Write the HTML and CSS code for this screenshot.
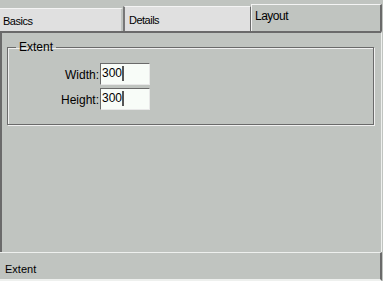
FILE: index.html
```html
<!DOCTYPE html>
<html lang="en">
<head>
  <meta charset="UTF-8" />
  <title>Properties</title>
  <link rel="stylesheet" href="styles.css">
</head>
<body>
  <div class="window">
    <div class="tabs">
      <div class="tab tab-basics">Basics</div>
      <div class="tab tab-details">Details</div>
      <div class="tab tab-layout active">Layout</div>
    </div>
    <div class="panel">
      <fieldset class="group">
        <legend>Extent</legend>
        <div class="form">
          <label>Width:</label>
          <div class="field">300<span class="caret"></span></div>
          <label>Height:</label>
          <div class="field">300<span class="caret"></span></div>
        </div>
      </fieldset>
    </div>
    <div class="status">Extent</div>
  </div>
</body>
</html>
```

FILE: styles.css
```css
body {
  margin: 0;
  background: #c0c4c0;
  font-family: "Liberation Sans", Arial, sans-serif;
  color: #000;
}
.window {
  width: 383px;
  height: 281px;
  display: flex;
  flex-direction: column;
}
.tabs {
  height: 31px;
  display: flex;
  align-items: flex-end;
  flex-shrink: 0;
}
.tab {
  box-sizing: border-box;
  font-size: 11px;
  letter-spacing: -0.5px;
  padding-left: 3px;
  border-top: 1px solid #f4f4f4;
  border-left: 1px solid #f4f4f4;
  border-right: 1px solid #6a6a6a;
}
.tab-basics {
  width: 123px;
  height: 23px;
  background: #e0e0e0;
  border-left: none;
  padding-top: 6px;
  padding-left: 3px;
  border-right: 2px solid #c0c4c0;
}
.tab-details {
  width: 128px;
  height: 25px;
  background: #e0e0e0;
  border-left: 2px solid #787878;
  padding-top: 7px;
  padding-left: 4px;
}
.tab-layout {
  width: 131px;
  height: 27px;
  background: #c0c4c0;
  border-right: 2px solid #6a6a6a;
  padding-top: 4px;
  padding-left: 3px;
  font-size: 12px;
}
.panel {
  flex: 1;
  border-top: 2px solid #6a6a6a;
  border-left: 2px solid #6a6a6a;
  border-right: 1px solid #eef0ee;
  margin-right: 1px;
  padding: 7px 6px 0 5px;
}
.group {
  margin: 0;
  padding: 8px 0 13px 0;
  height: 62px;
  width: 365px;
  border: 1px solid #6a6a6a;
  box-shadow: 1px 1px 0 #f0f0f0, inset 1px 1px 0 #f0f0f0;
}
.group legend {
  font-size: 12px;
  padding: 0 3px;
  margin-left: 8px;
}
.form {
  display: grid;
  grid-template-columns: 92px 50px;
  row-gap: 3px;
  align-items: center;
  margin-top: 1px;
}
.form label {
  text-align: right;
  font-size: 12px;
  padding-right: 1px;
  margin-top: 2px;
}
.field {
  box-sizing: border-box;
  height: 22px;
  background: #f8fcf8;
  border-top: 1px solid #6a6a6a;
  border-left: 1px solid #6a6a6a;
  border-right: 1px solid #e8e8e8;
  border-bottom: 1px solid #e8e8e8;
  font-size: 12px;
  padding: 2px 0 0 1px;
  display: flex;
  align-items: flex-start;
}
.caret {
  display: inline-block;
  width: 2px;
  height: 15px;
  background: #555;
}
.status {
  flex-shrink: 0;
  box-sizing: border-box;
  height: 29px;
  border-top: 1px solid #eef0ee;
  border-bottom: 2px solid #eef0ee;
  border-right: 2px solid #6a6a6a;
  margin-right: 1px;
  font-size: 11px;
  padding: 10px 0 0 5px;
}
```
